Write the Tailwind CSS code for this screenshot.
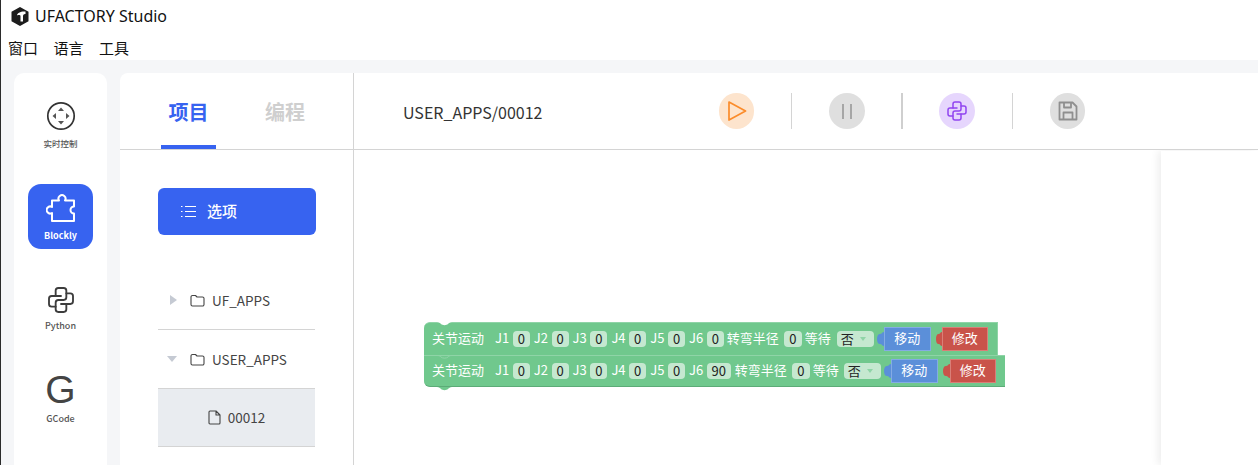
<!DOCTYPE html>
<html lang="en">
<head>
  <meta charset="UTF-8" />
  <title>UFACTORY Studio</title>
  <script src="https://cdn.jsdelivr.net/npm/@tailwindcss/browser@4"></script>
</head>
<body class="relative w-[1258px] h-[465px] overflow-hidden bg-white font-['Noto_Sans_CJK_SC','Noto_Sans',sans-serif] text-[#333]">
  <!-- dark sliver of the window behind -->
  <div class="absolute left-0 top-0 bottom-0 w-px bg-[#2b2b2b]"></div>

  <!-- title bar -->
  <div class="h-[33px] flex items-center pl-[11px] pb-[1px] gap-[6px] text-[16px] text-[#111] font-['Noto_Sans',sans-serif]">
    <svg class="w-[18px] h-[19px] shrink-0" viewBox="0 0 18 19"><path d="M9 0 17.500 4.800V14.200L9 19 .5 14.200V4.800z" fill="#1d1d1d"/><path d="M6 8.500C6 6 10 4 14.500 4.500V7C12.500 6.800 12 8 12 9.500V14.500H9.500V9C9.500 8 7.500 7.800 6 8.500z" fill="#fff"/></svg>
    <span>UFACTORY Studio</span>
  </div>
  <!-- menu -->
  <div class="h-[27px] flex items-center pl-[8px] pt-[3px] gap-[15.500px] text-[15px] text-[#111]">
    <span>窗口</span><span>语言</span><span>工具</span>
  </div>

  <div class="h-[405px] bg-[#f5f6f8] flex pt-[13px] pl-[14px] gap-[13px]">
    <!-- left nav -->
    <nav class="w-[93px] h-[400px] bg-white rounded-t-[10px] flex flex-col items-center pt-[14px] text-[#555]">
      <div class="w-[65px] h-[65px] flex flex-col items-center">
        <svg class="w-[30px] h-[30px] mt-[14px]" viewBox="0 0 30 30" fill="none"><circle cx="15" cy="15" r="13.200" stroke="#333" stroke-width="1.700"/><path d="M15 6.500l3 3.500h-6zM15 23.500l-3-3.500h6zM6.500 15l3.500-3v6zM23.500 15l-3.500 3v-6z" fill="#555"/></svg>
        <span class="text-[8.500px] font-medium mt-[6px] whitespace-nowrap">实时控制</span>
      </div>
      <div class="w-[65px] h-[65px] mt-[32px] bg-[#3763f0] rounded-[13px] flex flex-col items-center text-white">
        <svg class="w-[30px] h-[30px] mt-[9px]" viewBox="0 0 30 30" fill="none" stroke="#fff" stroke-width="2" stroke-linejoin="round"><path d="M6 7.500H13A3.500 3.500 0 1 1 19 7.500H28V13.500A3.500 3.500 0 0 0 28 20.500V28H6V20A3.500 3.500 0 1 1 6 14z"/></svg>
        <span class="text-[9px] font-bold mt-[6px]">Blockly</span>
      </div>
      <div class="w-[65px] h-[65px] mt-[35px] flex flex-col items-center">
        <svg class="w-[32px] h-[32px]" viewBox="0 0 24 24" fill="none" stroke="#3d3d3d" stroke-width="1.400" stroke-linecap="round" stroke-linejoin="round"><path d="M12 9h-7a2 2 0 0 0-2 2v4a2 2 0 0 0 2 2h3"/><path d="M12 15h7a2 2 0 0 0 2-2v-4a2 2 0 0 0-2-2h-3"/><path d="M8 9v-4a2 2 0 0 1 2-2h4a2 2 0 0 1 2 2v5a2 2 0 0 1-2 2h-4a2 2 0 0 0-2 2v5a2 2 0 0 0 2 2h4a2 2 0 0 0 2-2v-4"/></svg>
        <span class="text-[9px] font-medium mt-[3px]">Python</span>
      </div>
      <div class="w-[65px] h-[65px] mt-[21px] flex flex-col items-center">
        <span class="text-[39px] leading-[40px] text-[#444] font-['Liberation_Sans',sans-serif]">G</span>
        <span class="text-[9px] font-medium mt-[2px]">GCode</span>
      </div>
    </nav>

    <!-- main panel -->
    <main class="w-[1138px] h-[392px] bg-white rounded-tl-[8px] flex flex-col">
      <header class="h-[77px] flex border-b border-[#d4d4d4] shrink-0">
        <div class="w-[234px] border-r border-[#d4d4d4] flex pl-[41px] gap-[49px] text-[20px] font-bold">
          <div class="w-[55px] h-[76px] border-b-[4px] border-[#3763f0] text-[#3763f0] text-center pt-[24px] leading-[30px]">项目</div>
          <div class="w-[40px] text-[#cfcfcf] pt-[24px] leading-[30px]">编程</div>
        </div>
        <div class="flex-1 flex items-center">
          <span class="ml-[49px] w-[316px] text-[16px] pt-[2px]">USER_APPS/00012</span>
          <button class="w-[35px] h-[36px] rounded-full bg-[#fde4cd] flex items-center justify-center">
            <svg class="w-[20px] h-[20px]" viewBox="0 0 20 20" fill="none" stroke="#fb8c2b" stroke-width="1.700" stroke-linejoin="round"><path d="M2 1 18.500 10 2 19z"/></svg>
          </button>
          <i class="w-px h-[36px] bg-[#d4d4d4] ml-[37px]"></i>
          <button class="w-[36px] h-[36px] ml-[37px] rounded-full bg-[#dfdfdf] flex items-center justify-center">
            <svg class="w-[20px] h-[20px]" viewBox="0 0 20 20" stroke="#949494" stroke-width="1.500"><path d="M6 3v15M14 3v15"/></svg>
          </button>
          <i class="w-[2px] h-[36px] bg-[#cfcfcf] ml-[36px]"></i>
          <button class="w-[36px] h-[36px] ml-[36px] rounded-full bg-[#e6d6fd] flex items-center justify-center">
            <svg class="w-[24px] h-[24px]" viewBox="0 0 24 24" fill="none" stroke="#9146f0" stroke-width="1.500" stroke-linecap="round" stroke-linejoin="round"><path d="M12 9h-7a2 2 0 0 0-2 2v4a2 2 0 0 0 2 2h3"/><path d="M12 15h7a2 2 0 0 0 2-2v-4a2 2 0 0 0-2-2h-3"/><path d="M8 9v-4a2 2 0 0 1 2-2h4a2 2 0 0 1 2 2v5a2 2 0 0 1-2 2h-4a2 2 0 0 0-2 2v5a2 2 0 0 0 2 2h4a2 2 0 0 0 2-2v-4"/></svg>
          </button>
          <i class="w-px h-[36px] bg-[#d4d4d4] ml-[37px]"></i>
          <button class="w-[35px] h-[36px] ml-[37px] rounded-full bg-[#dfdfdf] flex items-center justify-center">
            <svg class="w-[20px] h-[20px]" viewBox="0 0 20 20" fill="none" stroke="#8f8f8f" stroke-width="1.800" stroke-linejoin="round"><path d="M1.500 1.500h13l4 4v13h-17zM6 1.500v5h7v-5M5.500 18.500v-7h9v7"/></svg>
          </button>
        </div>
      </header>

      <div class="flex-1 flex min-h-0">
        <!-- file tree -->
        <aside class="w-[234px] border-r border-[#d4d4d4] pl-[38px] pt-[38px]">
          <button class="w-[158px] h-[47px] rounded-[6px] bg-[#3763f0] text-white flex items-center pl-[23px] gap-[11px] text-[15px] font-medium">
            <svg class="w-[15px] h-[13px]" viewBox="0 0 15 13" stroke="#fff" stroke-width="1.200"><path d="M0 1.500h1.500M4 1.500h11M0 6.500h1.500M4 6.500h11M0 11.500h1.500M4 11.500h11"/></svg>
            选项
          </button>
          <div class="w-[157px] mt-[36px] text-[13.500px] text-[#444]">
            <div class="h-[59px] border-b border-[#d4d4d4] flex items-center pl-[12px]">
              <i class="w-0 h-0 border-y-[5px] border-y-transparent border-l-[7px] border-l-[#c5cad3]"></i>
              <svg class="w-[15px] h-[13px] ml-[13px]" viewBox="0 0 15 13" fill="none" stroke="#444" stroke-width="1.100" stroke-linejoin="round"><path d="M1 3a1.500 1.500 0 0 1 1.500-1.500h3L7 3h5.500A1.500 1.500 0 0 1 14 4.500v6a1.500 1.500 0 0 1-1.500 1.500h-10A1.500 1.500 0 0 1 1 10.500z"/></svg>
              <span class="ml-[7px]">UF_APPS</span>
            </div>
            <div class="h-[59px] border-b border-[#d4d4d4] flex items-center pl-[9px]">
              <i class="w-0 h-0 border-x-[5px] border-x-transparent border-t-[6px] border-t-[#c5cad3]"></i>
              <svg class="w-[15px] h-[13px] ml-[13px]" viewBox="0 0 15 13" fill="none" stroke="#444" stroke-width="1.100" stroke-linejoin="round"><path d="M1 3a1.500 1.500 0 0 1 1.500-1.500h3L7 3h5.500A1.500 1.500 0 0 1 14 4.500v6a1.500 1.500 0 0 1-1.500 1.500h-10A1.500 1.500 0 0 1 1 10.500z"/></svg>
              <span class="ml-[7px]">USER_APPS</span>
            </div>
            <div class="h-[58px] bg-[#e9ecf0] border-b border-[#d4d4d4] flex items-center justify-center gap-[7px]">
              <svg class="w-[13px] h-[15px]" viewBox="0 0 13 15" fill="none" stroke="#444" stroke-width="1.100" stroke-linejoin="round"><path d="M2 1h6l4 4v8a1 1 0 0 1-1 1H2a1 1 0 0 1-1-1V2a1 1 0 0 1 1-1zM8 1v4h4"/></svg>
              <span>00012</span>
            </div>
          </div>
        </aside>

        <!-- blockly workspace -->
        <section class="relative flex-1 overflow-hidden">
          <div class="absolute left-[807px] top-px bottom-0 right-0 shadow-[-3px_0_8px_rgba(0,0,0,0.07)] bg-white"></div>

          <div class="absolute left-[70px] top-[172px] text-[13px] text-white leading-none">
            <!-- first block -->
            <div class="relative h-[33px] w-[574px] bg-[#70c88d] rounded-tl-[6px] border-t border-r border-[#8fd4a7] flex items-center pl-[8px] whitespace-nowrap">
              <svg class="absolute left-[13px] top-[-1px] w-[15px] h-[4px]" viewBox="0 0 15 4"><path d="M0 0C2 0 3 1 4 2 5.500 3.500 9.500 3.500 11 2 12 1 13 0 15 0z" fill="#fff"/></svg>
              <span class="w-[52px] pb-[3px]">关节运动</span>
              <span class="ml-[11px] w-[17.800px] pb-[3px]">J1</span><b class="font-normal w-[17px] h-[16px] rounded-[4px] bg-[#c5e8d0] text-[#222] text-center leading-[15px]">0</b>
              <span class="ml-[4px] w-[17.800px] pb-[3px]">J2</span><b class="font-normal w-[17px] h-[16px] rounded-[4px] bg-[#c5e8d0] text-[#222] text-center leading-[15px]">0</b>
              <span class="ml-[4px] w-[17.800px] pb-[3px]">J3</span><b class="font-normal w-[17px] h-[16px] rounded-[4px] bg-[#c5e8d0] text-[#222] text-center leading-[15px]">0</b>
              <span class="ml-[4px] w-[17.800px] pb-[3px]">J4</span><b class="font-normal w-[17px] h-[16px] rounded-[4px] bg-[#c5e8d0] text-[#222] text-center leading-[15px]">0</b>
              <span class="ml-[4px] w-[17.800px] pb-[3px]">J5</span><b class="font-normal w-[17px] h-[16px] rounded-[4px] bg-[#c5e8d0] text-[#222] text-center leading-[15px]">0</b>
              <span class="ml-[4px] w-[17.800px] pb-[3px]">J6</span><b class="font-normal w-[17px] h-[16px] rounded-[4px] bg-[#c5e8d0] text-[#222] text-center leading-[15px]">0</b>
              <span class="ml-[3px] w-[52px] pb-[3px]">转弯半径</span><b class="ml-[5px] font-normal w-[18px] h-[16px] rounded-[4px] bg-[#c5e8d0] text-[#222] text-center leading-[15px]">0</b>
              <span class="ml-[3px] w-[26px] pb-[3px]">等待</span>
              <b class="ml-[6px] font-normal w-[37px] h-[16px] rounded-[4px] bg-[#c5e8d0] text-[#222] pl-[4px] pb-[2px] leading-[13px] flex items-center">否<i class="ml-[6px] mt-[2px] w-0 h-0 border-x-[3px] border-x-transparent border-t-[4px] border-t-[#8fd4a7]"></i></b>
              <svg class="ml-[3px] w-[7px] h-[16px] shrink-0" viewBox="0 0 7 16"><path d="M7 1C5 1 5 3 3 3 1 3 0 5 0 8 0 11 1 13 3 13 5 13 5 15 7 15z" fill="#5b8fd9"/></svg>
              <span class="w-[47px] h-[24px] bg-[#5b8fd9] border border-[#84abe4] text-center leading-[20px]">移动</span>
              <svg class="ml-[5px] w-[6px] h-[16px] shrink-0" viewBox="0 0 7 16" preserveAspectRatio="none"><path d="M7 1C5 1 5 3 3 3 1 3 0 5 0 8 0 11 1 13 3 13 5 13 5 15 7 15z" fill="#c9534a"/></svg>
              <span class="w-[46px] h-[24px] bg-[#c9534a] border border-[#d97f78] text-center leading-[20px]">修改</span>
            </div>
            <!-- second block -->
            <div class="relative h-[32px] w-[581px] bg-[#70c88d] rounded-bl-[6px] border-t border-t-[#8fd4a7] border-b border-b-[#5cab77] flex items-center pl-[8px] whitespace-nowrap">
              <svg class="absolute left-[13px] top-[-1px] w-[15px] h-[4px]" viewBox="0 0 15 4"><path d="M0 .5C2 .5 3 1 4 2 5.500 3.500 9.500 3.500 11 2 12 1 13 .5 15 .5" fill="none" stroke="#8fd4a7"/></svg>
              <svg class="absolute left-[13px] top-[31px] w-[15px] h-[4px]" viewBox="0 0 15 4"><path d="M0 0C2 0 3 1 4 2 5.500 3.500 9.500 3.500 11 2 12 1 13 0 15 0z" fill="#70c88d"/></svg>
              <span class="w-[52px] pb-[3px]">关节运动</span>
              <span class="ml-[11px] w-[17.800px] pb-[3px]">J1</span><b class="font-normal w-[17px] h-[16px] rounded-[4px] bg-[#c5e8d0] text-[#222] text-center leading-[15px]">0</b>
              <span class="ml-[4px] w-[17.800px] pb-[3px]">J2</span><b class="font-normal w-[17px] h-[16px] rounded-[4px] bg-[#c5e8d0] text-[#222] text-center leading-[15px]">0</b>
              <span class="ml-[4px] w-[17.800px] pb-[3px]">J3</span><b class="font-normal w-[17px] h-[16px] rounded-[4px] bg-[#c5e8d0] text-[#222] text-center leading-[15px]">0</b>
              <span class="ml-[4px] w-[17.800px] pb-[3px]">J4</span><b class="font-normal w-[17px] h-[16px] rounded-[4px] bg-[#c5e8d0] text-[#222] text-center leading-[15px]">0</b>
              <span class="ml-[4px] w-[17.800px] pb-[3px]">J5</span><b class="font-normal w-[17px] h-[16px] rounded-[4px] bg-[#c5e8d0] text-[#222] text-center leading-[15px]">0</b>
              <span class="ml-[4px] w-[17.800px] pb-[3px]">J6</span><b class="font-normal w-[24px] h-[16px] rounded-[4px] bg-[#c5e8d0] text-[#222] text-center leading-[15px]">90</b>
              <span class="ml-[4px] w-[52px] pb-[3px]">转弯半径</span><b class="ml-[5px] font-normal w-[18px] h-[16px] rounded-[4px] bg-[#c5e8d0] text-[#222] text-center leading-[15px]">0</b>
              <span class="ml-[3px] w-[26px] pb-[3px]">等待</span>
              <b class="ml-[5px] font-normal w-[37px] h-[16px] rounded-[4px] bg-[#c5e8d0] text-[#222] pl-[4px] pb-[2px] leading-[13px] flex items-center">否<i class="ml-[6px] mt-[2px] w-0 h-0 border-x-[3px] border-x-transparent border-t-[4px] border-t-[#8fd4a7]"></i></b>
              <svg class="ml-[3px] w-[7px] h-[16px] shrink-0" viewBox="0 0 7 16"><path d="M7 1C5 1 5 3 3 3 1 3 0 5 0 8 0 11 1 13 3 13 5 13 5 15 7 15z" fill="#5b8fd9"/></svg>
              <span class="w-[47px] h-[24px] bg-[#5b8fd9] border border-[#84abe4] text-center leading-[20px]">移动</span>
              <svg class="ml-[5px] w-[7px] h-[16px] shrink-0" viewBox="0 0 7 16"><path d="M7 1C5 1 5 3 3 3 1 3 0 5 0 8 0 11 1 13 3 13 5 13 5 15 7 15z" fill="#c9534a"/></svg>
              <span class="w-[46px] h-[24px] bg-[#c9534a] border border-[#d97f78] text-center leading-[20px]">修改</span>
            </div>
          </div>
        </section>
      </div>
    </main>
  </div>
</body>
</html>
